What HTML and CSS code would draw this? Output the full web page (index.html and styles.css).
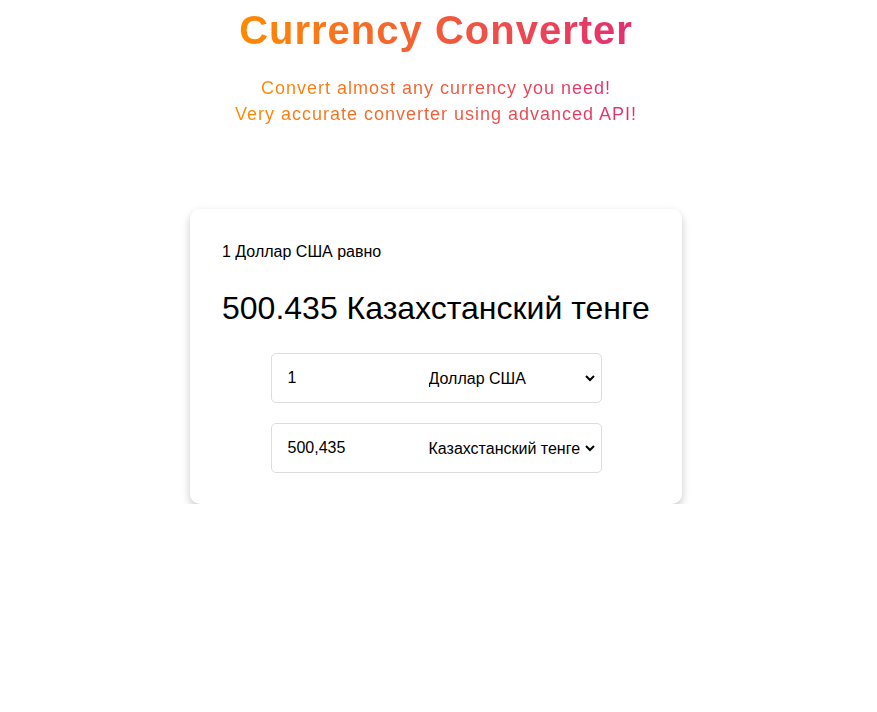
FILE: index.html
```html
<!DOCTYPE html>
<html lang="ru">
<head>
<meta charset="utf-8">
<title>Currency Converter</title>
<link rel="stylesheet" href="styles.css">
</head>
<body>
<header class="hero">
  <h1 class="title"><span class="grad">Currency Converter</span></h1>
  <p class="subtitle"><span class="grad">Convert almost any currency you need!</span><br><span class="grad">Very accurate converter using advanced API!</span></p>
</header>
<main class="card">
  <p class="rate-from">1 Доллар США равно</p>
  <p class="rate-to">500.435 Казахстанский тенге</p>
  <div class="rows">
    <div class="field">
      <input class="amount" type="number" value="1">
      <select class="currency">
        <option>Доллар США</option>
      </select>
    </div>
    <div class="field">
      <input class="amount" type="text" value="500,435">
      <select class="currency">
        <option>Казахстанский тенге</option>
      </select>
    </div>
  </div>
</main>
</body>
</html>
```
FILE: styles.css
```css
* { box-sizing: border-box; }
body {
  margin: 0;
  padding-right: 5px;
  font-family: "Liberation Sans", Arial, sans-serif;
  background: #fff;
  color: #000;
  display: flex;
  flex-direction: column;
  align-items: center;
}
.hero {
  text-align: center;
}
.grad {
  background: linear-gradient(90deg, #ff8a00 0%, #e52e71 100%);
  -webkit-background-clip: text;
  background-clip: text;
  color: transparent;
}
.title {
  margin: 8px 0 0;
  font-size: 40px;
  font-weight: 700;
  letter-spacing: 1px;
  line-height: 44px;
}
.subtitle {
  margin: 23px 0 0;
  font-size: 18px;
  letter-spacing: 1px;
  line-height: 26px;
}
.card {
  margin-top: 82px;
  width: 492px;
  padding: 33px 32px 31px;
  border-radius: 10px;
  box-shadow: 0 4px 8px rgba(0,0,0,0.22);
  background: #fff;
}
.rate-from {
  margin: 0;
  font-size: 16px;
  line-height: 20px;
}
.rate-to {
  margin: 26px 0 0;
  font-size: 32px;
  line-height: 40px;
}
.rows {
  margin-top: 25px;
  display: flex;
  flex-direction: column;
  align-items: center;
  gap: 20px;
}
.field {
  width: 331px;
  height: 50px;
  border: 1px solid #ddd;
  border-radius: 5px;
  display: flex;
  align-items: center;
  padding: 0 3px 0 16px;
}
.amount {
  flex: 1;
  min-width: 0;
  border: none;
  outline: none;
  font: 16px "Liberation Sans", Arial, sans-serif;
  padding: 0;
  background: transparent;
}
.amount::-webkit-inner-spin-button,
.amount::-webkit-outer-spin-button { -webkit-appearance: none; margin: 0; }
.currency {
  width: 173px;
  border: none;
  outline: none;
  background: transparent;
  font: 16px "Liberation Sans", Arial, sans-serif;
  color: #000;
}
```
